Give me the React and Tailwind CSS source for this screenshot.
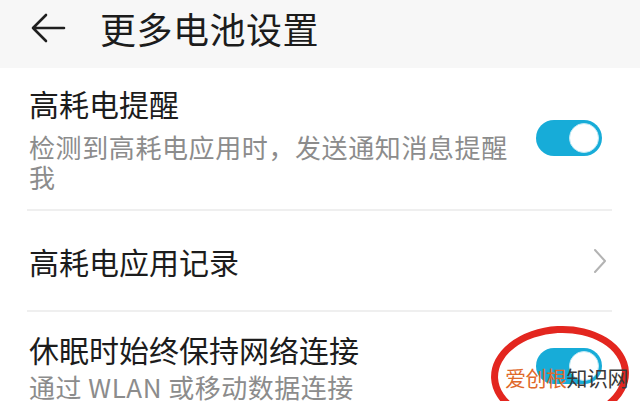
import React from "react";

function Toggle() {
  return (
    <div className="w-[66px] h-[36px] rounded-full bg-[#17acd8] flex items-center justify-end pr-[3px] shrink-0">
      <div className="w-[30px] h-[30px] rounded-full bg-white border border-[#bfe9f5]" />
    </div>
  );
}

function Chevron() {
  return (
    <svg width="14" height="26" viewBox="0 0 14 26" className="shrink-0 mr-[5px]">
      <path d="M2 2 L12 13 L2 24" fill="none" stroke="#b3b3b3" strokeWidth="2" strokeLinecap="round" strokeLinejoin="round" />
    </svg>
  );
}

export default function App() {
  return (
    <div className="relative w-[640px] h-[401px] overflow-hidden bg-white font-['Noto_Sans_CJK_SC','Noto_Sans',sans-serif]">
      {/* header */}
      <div className="h-[68px] bg-[#f7f7f7] flex items-center pl-[30px] pb-[13px]">
        <svg width="36" height="30" viewBox="0 0 36 30">
          <path d="M34 15 H3 M16 2 L3 15 L16 28" fill="none" stroke="#1f1f1f" strokeWidth="2.6" strokeLinecap="round" strokeLinejoin="round" />
        </svg>
        <h1 className="ml-[34px] text-[36px] leading-none tracking-[0.5px] text-[#1c1c1c]">更多电池设置</h1>
      </div>

      {/* rows */}
      <div className="ml-[27px] mr-[28px]">
        <div className="flex items-center pt-[16px] pb-[17px] pr-[10px] border-b-2 border-[#efefef]">
          <div className="flex-1 pl-[2px]">
            <div className="text-[30px] leading-[38px] text-[#1c1c1c]">高耗电提醒</div>
            <div className="mt-[10px] w-[490px] text-[26px] leading-[30px] tracking-[0.6px] text-[#8c8c8c]">
              检测到高耗电应用时，发送通知消息提醒我
            </div>
          </div>
          <Toggle />
        </div>

        <div className="h-[101px] flex items-center border-b-2 border-[#efefef]">
          <div className="flex-1 pl-[2px] text-[30px] leading-[38px] text-[#1c1c1c]">高耗电应用记录</div>
          <Chevron />
        </div>

        <div className="flex items-center pt-[18px] pr-[10px]">
          <div className="flex-1 pl-[2px]">
            <div className="text-[30px] leading-[38px] text-[#1c1c1c]">休眠时始终保持网络连接</div>
            <div className="mt-[4px] text-[26px] leading-[30px] tracking-[0.5px] text-[#8c8c8c]">
              通过 WLAN 或移动数据连接
            </div>
          </div>
          <Toggle />
        </div>
      </div>

      {/* annotation overlay */}
      <div className="absolute left-[491px] top-[326px] w-[138px] h-[98px] rounded-[50%] border-[7px] border-[#e3261f] -rotate-3" />
      <div className="absolute left-[505px] top-[364px] text-[21px] leading-[26px] tracking-[-0.5px]">
        <span className="text-[#e0692b]">爱创根</span>
        <span className="text-[#3a3a3a]">知识网</span>
      </div>
    </div>
  );
}
